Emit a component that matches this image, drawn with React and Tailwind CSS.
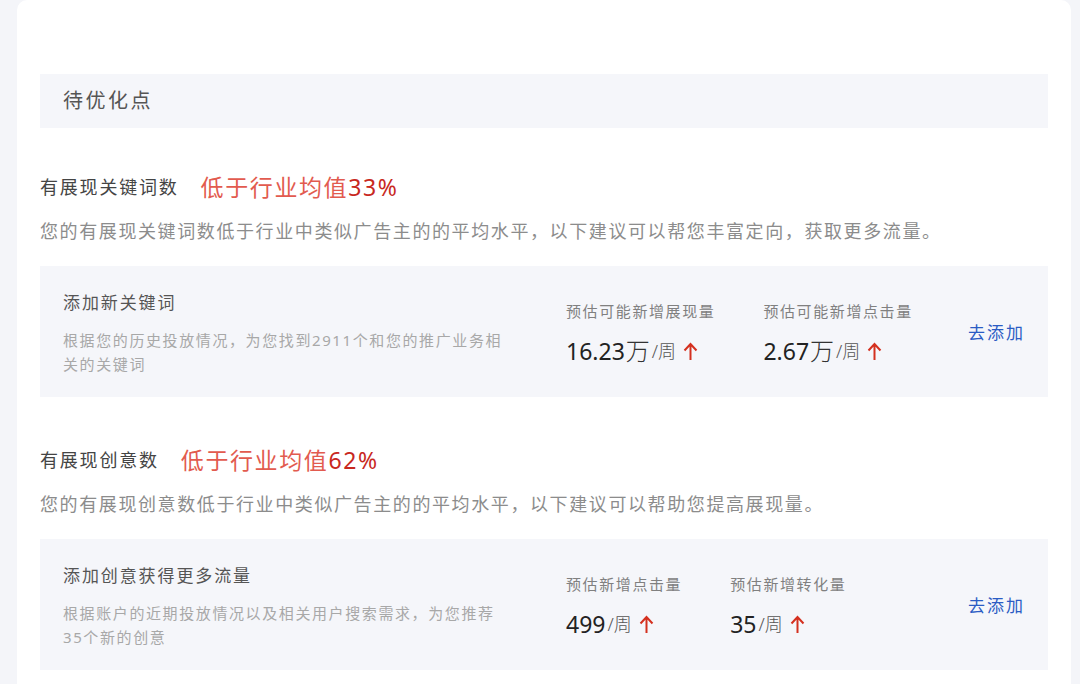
const font = { fontFamily: '"Noto Sans", "Noto Sans CJK SC", sans-serif' };

function UpArrow() {
  return (
    <svg width="17" height="20" viewBox="0 0 17 20" className="ml-[6px] inline-block">
      <path d="M8.5 3 V19 M2.5 9.5 L8.5 3 L14.5 9.5" fill="none" stroke="#d4301f" strokeWidth="2" />
    </svg>
  );
}

function Stat({ label, value, unit }) {
  return (
    <div className="flex flex-col">
      <div className="text-[15px] leading-[22px] tracking-[1.6px] text-[#808080] whitespace-nowrap">{label}</div>
      <div className="mt-[14px] flex items-center leading-[30px] whitespace-nowrap">
        <span className="text-[23px] text-[#222]">{value}</span>
        {unit && <span className="ml-[1px] text-[24px] font-light text-[#333]">{unit}</span>}
        <span className="ml-[2px] text-[18px] font-light text-[#555]">/周</span>
        <UpArrow />
      </div>
    </div>
  );
}

function Section({ title, percent, desc, cardTitle, cardDesc, stats, top }) {
  return (
    <div className={top}>
      <div className="flex items-center h-[30px]">
        <span className="text-[18px] tracking-[1.8px] text-[#444]">{title}</span>
        <span className="ml-[22px] text-[23px] tracking-[1.6px] text-[#e25b4f]">
          低于行业均值<span className="text-[#c8281e]">{percent}</span>
        </span>
      </div>
      <div className="mt-[15px] text-[18px] leading-[28px] tracking-[1.6px] text-[#8c8c8c] whitespace-nowrap">
        {desc}
      </div>
      <div className="mt-[21px] flex items-center bg-[#f5f6fa] pl-[23px] pr-[23px] pt-[24px] pb-[21px]">
        <div className="w-[503px] shrink-0">
          <div className="text-[17px] leading-[26px] tracking-[1.9px] text-[#555]">{cardTitle}</div>
          <div className="mt-[12px] w-[445px] text-[15px] leading-[24px] tracking-[1.6px] text-[#a8a8a8]">
            {cardDesc}
          </div>
        </div>
        <div className="flex gap-[48px]">
          {stats.map((s) => (
            <Stat key={s.label} {...s} />
          ))}
        </div>
        <div className="flex-1" />
        <div className="text-[17px] tracking-[2px] text-[#2b5cc4] cursor-pointer">去添加</div>
      </div>
    </div>
  );
}

export default function App() {
  return (
    <div style={font} className="h-[684px] overflow-hidden bg-[#f4f5f9] pl-[17px] pr-[9px]">
      <div className="h-full rounded-t-[10px] bg-white px-[23px] pt-[74px]">
        <div className="flex h-[54px] items-center bg-[#f5f6fa] pl-[23px]">
          <span className="text-[20px] tracking-[2.5px] text-[#555]">待优化点</span>
        </div>

        <Section
          top="mt-[44px]"
          title="有展现关键词数"
          percent="33%"
          desc="您的有展现关键词数低于行业中类似广告主的的平均水平，以下建议可以帮您丰富定向，获取更多流量。"
          cardTitle="添加新关键词"
          cardDesc="根据您的历史投放情况，为您找到2911个和您的推广业务相关的关键词"
          stats={[
            { label: "预估可能新增展现量", value: "16.23", unit: "万" },
            { label: "预估可能新增点击量", value: "2.67", unit: "万" },
          ]}
        />

        <Section
          top="mt-[48px]"
          title="有展现创意数"
          percent="62%"
          desc="您的有展现创意数低于行业中类似广告主的的平均水平，以下建议可以帮助您提高展现量。"
          cardTitle="添加创意获得更多流量"
          cardDesc="根据账户的近期投放情况以及相关用户搜索需求，为您推荐35个新的创意"
          stats={[
            { label: "预估新增点击量", value: "499" },
            { label: "预估新增转化量", value: "35" },
          ]}
        />
      </div>
    </div>
  );
}
